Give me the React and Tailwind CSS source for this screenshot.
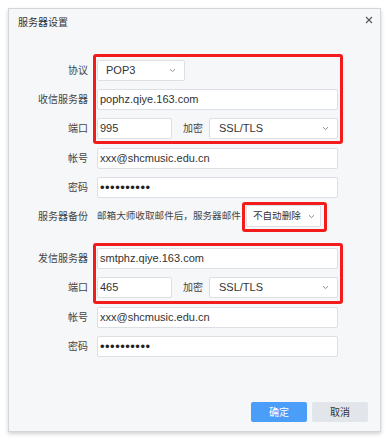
const LABEL = 'w-[79px] shrink-0 text-right text-[10px] text-[#444] mr-[9px]';
const BOX = 'flex items-center bg-white border border-[#dcdfe3] rounded-[2px] text-[#333] whitespace-nowrap';

function Chevron() {
  return (
    <svg width="7" height="5" viewBox="0 0 7 5" className="shrink-0">
      <path d="M1 1.2l2.5 2.4L6 1.2" fill="none" stroke="#8a8d92" strokeWidth="1" />
    </svg>
  );
}

function Select({ value, className, textClass = 'pl-[8px] text-[11px]' }) {
  return (
    <div className={`${BOX} justify-between ${className}`}>
      <span className={textClass}>{value}</span>
      <Chevron />
    </div>
  );
}

function Input({ value, className = 'w-[241px]' }) {
  return <div className={`${BOX} h-[21px] pl-[2px] text-[11px] ${className}`}>{value}</div>;
}

function Dots() {
  return (
    <div className={`${BOX} h-[21px] pl-[2px] w-[241px]`}>
      <span className="text-[13px] tracking-[0.5px] leading-none text-[#222]">••••••••••</span>
    </div>
  );
}

function Row({ label, children, className = '' }) {
  return (
    <div className={`flex items-center ${className}`}>
      <div className={LABEL}>{label}</div>
      {children}
    </div>
  );
}

function PortRow({ port }) {
  return (
    <Row label="端口">
      <Input value={port} className="w-[75px]" />
      <span className="ml-[11px] mr-[6px] text-[10px] text-[#444]">加密</span>
      <Select value="SSL/TLS" className="w-[129px] h-[21px] pr-[8px]" textClass="pl-[9px] text-[11px]" />
    </Row>
  );
}

export default function App() {
  return (
    <div className="min-h-[440px] bg-white p-2 [font-family:'Liberation_Sans','Noto_Sans_CJK_SC',sans-serif]">
      <div className="w-[373px] h-[424px] flex flex-col border border-[#d4d6da] bg-[#f6f7f9] shadow-[0_2px_4px_rgba(0,0,0,0.18)]">
        {/* 标题栏 */}
        <div className="flex items-start justify-between pl-[9px] pr-[7px] pt-[7px]">
          <span className="text-[10px] leading-[14px] text-[#333]">服务器设置</span>
          <svg width="8" height="8" viewBox="0 0 8 8">
            <path d="M1 1l6 6M7 1L1 7" stroke="#555" strokeWidth="1.1" />
          </svg>
        </div>

        <div className="mt-[30px] flex flex-col gap-2">
          {/* 收信 */}
          <div className="relative flex flex-col gap-2">
            <Row label="协议">
              <Select value="POP3" className="w-[88px] h-[21px] pr-[8px]" />
            </Row>
            <Row label="收信服务器">
              <Input value="pophz.qiye.163.com" />
            </Row>
            <PortRow port="995" />
            <span className="pointer-events-none absolute left-[84px] right-[37px] -top-[6px] -bottom-[5px] border-[3px] border-[#f21c1c] rounded-[3px]" />
          </div>
          <Row label="帐号" className="mt-px">
            <Input value="xxx@shcmusic.edu.cn" />
          </Row>
          <Row label="密码">
            <Dots />
          </Row>
          <Row label="服务器备份" className="-mt-px">
            <span className="whitespace-nowrap text-[9.6px] text-[#444] mr-[5px]">邮箱大师收取邮件后，服务器邮件</span>
            <div className="relative shrink-0">
              <Select value="不自动删除" className="w-[75px] h-[22px] pr-[5px]" textClass="pl-[6px] text-[9.6px]" />
              <span className="pointer-events-none absolute -left-[4px] -right-[6px] -top-[3px] -bottom-[5px] border-[3px] border-[#f21c1c] rounded-[3px]" />
            </div>
          </Row>

          {/* 发信 */}
          <div className="relative mt-[13px] flex flex-col gap-2">
            <Row label="发信服务器">
              <Input value="smtphz.qiye.163.com" />
            </Row>
            <PortRow port="465" />
            <span className="pointer-events-none absolute left-[84px] right-[37px] -top-[5px] -bottom-[6px] border-[3px] border-[#f21c1c] rounded-[3px]" />
          </div>
          <Row label="帐号" className="mt-px">
            <Input value="xxx@shcmusic.edu.cn" />
          </Row>
          <Row label="密码">
            <Dots />
          </Row>
        </div>

        <div className="mt-auto flex justify-end gap-[5px] pr-[12px] pb-[9px]">
          <button className="w-[56px] h-[20px] rounded-[2px] bg-[#4b9ef7] text-[10px] text-white">确定</button>
          <button className="w-[56px] h-[20px] rounded-[2px] bg-[#e2e5ea] text-[10px] text-[#333]">取消</button>
        </div>
      </div>
    </div>
  );
}
